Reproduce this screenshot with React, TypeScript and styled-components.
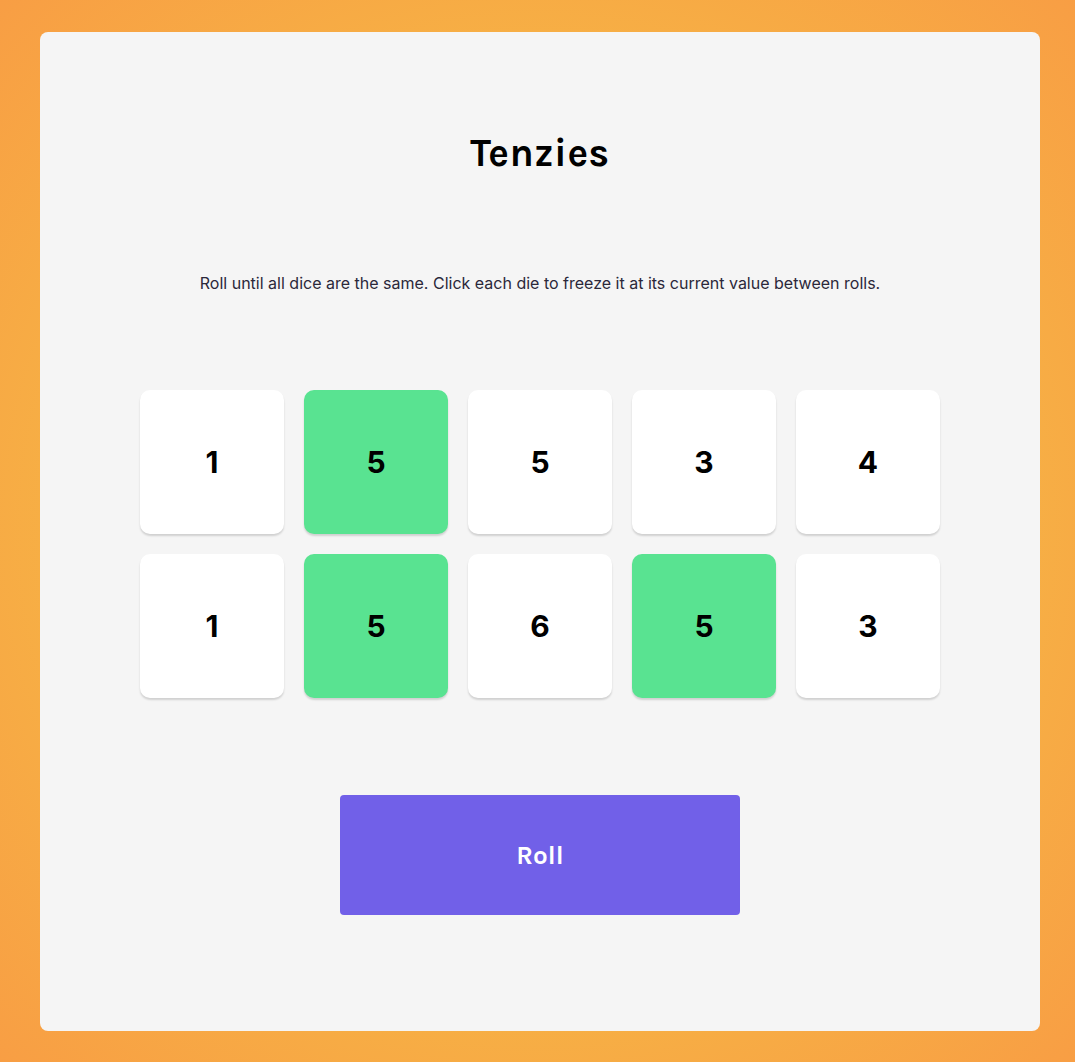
import React from 'react'
import styled, { createGlobalStyle } from 'styled-components'

const GlobalStyle = createGlobalStyle`
  html, body {
    margin: 0;
    padding: 0;
  }
  body {
    font-family: Inter, 'Liberation Sans', sans-serif;
    background: radial-gradient(circle at 50% 50%, #f5bd44 0%, #f6b845 45%, #f89e44 100%);
    min-height: 1062px;
  }
`

interface DieData {
  value: number
  isHeld: boolean
}

const dice: DieData[] = [
  { value: 1, isHeld: false },
  { value: 5, isHeld: true },
  { value: 5, isHeld: false },
  { value: 3, isHeld: false },
  { value: 4, isHeld: false },
  { value: 1, isHeld: false },
  { value: 5, isHeld: true },
  { value: 6, isHeld: false },
  { value: 5, isHeld: true },
  { value: 3, isHeld: false },
]

const App: React.FC = () => {
  return (
    <>
      <GlobalStyle />
      <Page>
        <Board>
          <Title>Tenzies</Title>
          <Instructions>
            Roll until all dice are the same. Click each die to freeze it at its current value between rolls.
          </Instructions>
          <DiceGrid>
            {dice.map((die, i) => (
              <Die key={i} $held={die.isHeld}>
                {die.value}
              </Die>
            ))}
          </DiceGrid>
          <RollButton>Roll</RollButton>
        </Board>
      </Page>
    </>
  )
}

export default App

const Page = styled.div`
  display: flex;
  justify-content: flex-start;
  padding: 32px 35px 31px 40px;
  box-sizing: border-box;
  height: 1062px;
`

const Board = styled.main`
  width: 1000px;
  height: 999px;
  background-color: #f5f5f5;
  border-radius: 8px;
  display: flex;
  flex-direction: column;
  align-items: center;
  box-sizing: border-box;
  padding-top: 97px;
`

const Title = styled.h1`
  margin: 0;
  font-family: Karla, Inter, 'Liberation Sans', sans-serif;
  font-size: 39px;
  font-weight: 700;
  line-height: 48px;
  color: #000000;
  letter-spacing: 0.5px;
`

const Instructions = styled.p`
  margin: 94px 0 0;
  font-size: 16px;
  line-height: 24px;
  color: #2b283a;
  text-align: center;
`

const DiceGrid = styled.div`
  display: grid;
  grid-template-columns: repeat(5, 144px);
  gap: 20px;
  margin-top: 95px;
`

const Die = styled.div<{ $held: boolean }>`
  width: 144px;
  height: 144px;
  border-radius: 10px;
  background-color: ${p => (p.$held ? '#59e391' : '#ffffff')};
  box-shadow: 0 2px 2px rgba(0, 0, 0, 0.15);
  display: flex;
  align-items: center;
  justify-content: center;
  font-size: 30px;
  font-weight: 700;
  color: #000000;
  cursor: pointer;
`

const RollButton = styled.button`
  margin-top: 97px;
  width: 400px;
  height: 120px;
  border: none;
  border-radius: 4px;
  background-color: #7160e8;
  color: #ffffff;
  font-family: Karla, Inter, 'Liberation Sans', sans-serif;
  font-size: 26px;
  font-weight: 700;
  cursor: pointer;

  &:hover {
    opacity: 0.9;
  }
`
